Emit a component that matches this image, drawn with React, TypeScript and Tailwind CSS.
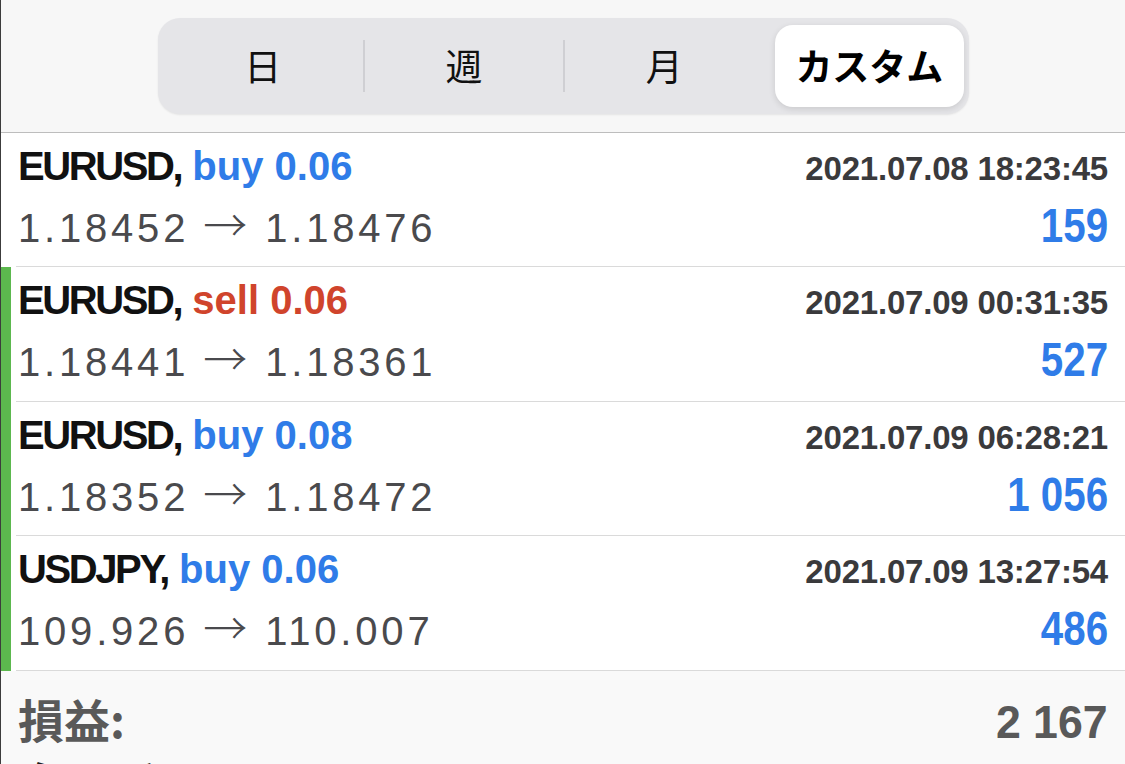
import React from "react";

const trades = [
  {
    symbol: "EURUSD",
    side: "buy",
    volume: "0.06",
    time: "2021.07.08 18:23:45",
    open: "1.18452",
    close: "1.18476",
    profit: "159",
    marked: false,
    height: "h-[134px]",
  },
  {
    symbol: "EURUSD",
    side: "sell",
    volume: "0.06",
    time: "2021.07.09 00:31:35",
    open: "1.18441",
    close: "1.18361",
    profit: "527",
    marked: true,
    height: "h-[135px]",
  },
  {
    symbol: "EURUSD",
    side: "buy",
    volume: "0.08",
    time: "2021.07.09 06:28:21",
    open: "1.18352",
    close: "1.18472",
    profit: "1 056",
    marked: true,
    height: "h-[134px]",
  },
  {
    symbol: "USDJPY",
    side: "buy",
    volume: "0.06",
    time: "2021.07.09 13:27:54",
    open: "109.926",
    close: "110.007",
    profit: "486",
    marked: true,
    height: "h-[135px]",
  },
];

function Segments() {
  const items = ["日", "週", "月", "カスタム"];
  return (
    <div className="flex h-[96px] w-[811px] items-stretch rounded-[22px] bg-[#e5e5e8] px-[5px] py-[7px] shadow-[0_1px_2px_rgba(0,0,0,0.08)]">
      {items.map((item, i) => {
        const active = i === items.length - 1;
        return (
          <div key={item} className="flex flex-1 items-center">
            {i > 0 && i < items.length - 1 && (
              <div className="h-[52px] w-[2px] bg-[#cfcfd3]" />
            )}
            {active ? (
              <div className="ml-[12px] flex h-full flex-1 items-center justify-center rounded-[18px] bg-white text-[37px] font-bold text-black shadow-[0_2px_6px_rgba(0,0,0,0.12)]">
                {item}
              </div>
            ) : (
              <div className="flex flex-1 items-center justify-center text-[37px] text-[#111]">
                {item}
              </div>
            )}
          </div>
        );
      })}
    </div>
  );
}

function TradeRow({ trade }: { trade: any }) {
  const sideColor = trade.side === "buy" ? "text-[#2f7ce8]" : "text-[#d0442c]";
  return (
    <div className={`flex ${trade.height}`}>
      <div className="w-[15px] shrink-0">
        {trade.marked && <div className="h-full w-[10px] bg-[#5cb84e]" />}
      </div>
      <div className="flex-1 border-b border-[#dadada] pl-[2px] pr-[17px] pt-[9px]">
        <div className="flex items-baseline justify-between">
          <span className="text-[40px] font-bold leading-[48px]">
            <span className="tracking-[-2.4px] text-[#111]">{trade.symbol},</span>{" "}
            <span className={sideColor}>
              {trade.side} {trade.volume}
            </span>
          </span>
          <span className="text-[33px] font-bold leading-[48px] tracking-[-0.2px] text-[#3a3a3c]">
            {trade.time}
          </span>
        </div>
        <div className="mt-[6px] flex items-baseline justify-between">
          <span className="text-[40px] leading-[48px] tracking-[3.8px] text-[#4a4a4d]">
            {trade.open}
            <span className="ml-[14px] mr-[18px] font-['Noto_Sans_CJK_JP',sans-serif] text-[44px] font-light tracking-normal">→</span>
            {trade.close}
          </span>
          <span className="inline-block origin-right scale-x-[0.84] text-[48px] font-bold leading-[48px] text-[#2f7ce8]">
            {trade.profit}
          </span>
        </div>
      </div>
    </div>
  );
}

export default function App() {
  return (
    <div className="h-[764px] w-[1125px] overflow-hidden border-l border-[#3c3c3c] bg-white font-['Liberation_Sans','Noto_Sans_CJK_JP',sans-serif]">
      <div className="flex h-[133px] items-start justify-center border-b border-[#bdbdbd] bg-[#f7f7f7] pt-[18px] font-['Noto_Sans_CJK_JP',sans-serif]">
        <Segments />
      </div>

      {trades.map((trade, i) => (
        <TradeRow key={i} trade={trade} />
      ))}

      <div className="bg-[#f9f9f9] px-[17px] pt-[19px]">
        <div className="flex items-baseline justify-between text-[#595959]">
          <span className="font-['Noto_Sans_CJK_JP',sans-serif] text-[46px] font-bold leading-[56px]">
            損益:
          </span>
          <span className="inline-block origin-right scale-x-[0.95] text-[47px] font-bold leading-[56px]">
            2 167
          </span>
        </div>
        <div className="font-['Noto_Sans_CJK_JP',sans-serif] text-[46px] font-bold leading-[60px] text-[#1c1c1c]">
          クレジット:
        </div>
      </div>
    </div>
  );
}
